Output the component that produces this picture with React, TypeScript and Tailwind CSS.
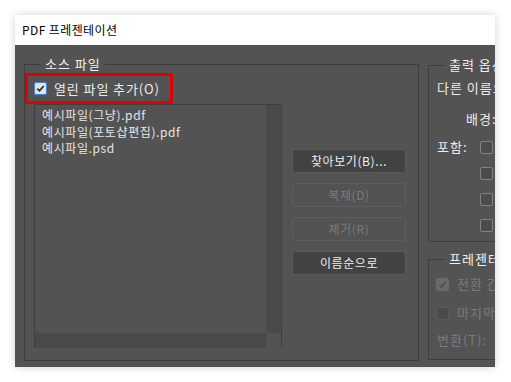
import React from 'react';

const FONT = { fontFamily: "'Noto Sans CJK KR', 'Noto Sans', sans-serif" };

type BoxKind = 'active' | 'off' | 'disabledOn' | 'disabledOff';

const Check: React.FC<{ kind: BoxKind }> = ({ kind }) => {
  const styles: Record<BoxKind, string> = {
    active: 'bg-[#dfe3ea] border-[#4d7fd4]',
    off: 'bg-[#4c4c4c] border-[#838383]',
    disabledOn: 'bg-[#6a6a6a] border-[#6a6a6a]',
    disabledOff: 'bg-[#4b4b4b] border-[#5c5c5c]',
  };
  const checked = kind === 'active' || kind === 'disabledOn';
  return (
    <span className={`w-[13px] h-[13px] shrink-0 rounded-[2px] border flex items-center justify-center ${styles[kind]}`}>
      {checked && (
        <svg width="9" height="9" viewBox="0 0 9 9">
          <path
            d="M1.3 4.6 L3.5 6.8 L7.7 2"
            fill="none"
            stroke={kind === 'active' ? '#2b2b2b' : '#4f4f4f'}
            strokeWidth="1.8"
          />
        </svg>
      )}
    </span>
  );
};

const Btn: React.FC<{ label: React.ReactNode; disabled?: boolean }> = ({ label, disabled }) => (
  <div
    className={`h-[24px] w-[114px] rounded-[3px] border flex items-center justify-center text-[12px] tracking-[0.6px] ${
      disabled
        ? 'bg-[#535353] border-[#5e5e5e] text-[#7b7b7b]'
        : 'bg-[#424242] border-[#5b5b5b] text-[#f0f0f0]'
    }`}
  >
    {label}
  </div>
);

const files = ['예시파일(그냥).pdf', '예시파일(포토샵편집).pdf', '예시파일.psd'];

export default function App() {
  return (
    <div className="min-h-screen bg-white p-[15px]" style={FONT}>
      <div className="w-[480px] h-[352px] overflow-hidden flex flex-col shadow-[0_0_8px_rgba(0,0,0,0.18)]">
        {/* Title bar */}
        <div className="h-[30px] shrink-0 bg-white flex items-center pl-[7px] text-[12px] tracking-[0.4px] text-black">
          PDF 프레젠테이션
        </div>

        {/* Body */}
        <div className="flex-1 bg-[#535353] flex items-start pl-[9px] pt-[11px] text-[#ececec]">
          {/* Source files */}
          <fieldset className="w-[395px] h-[305px] shrink-0 border border-[#3d3d3d]">
            <legend className="ml-[16px] px-[4px] text-[13px] leading-[16px] tracking-[1px] text-[#f0f0f0]">소스 파일</legend>
            <div className="mt-[1px] w-[148px] h-[31px] border-[3px] border-[#e20000] flex items-center pl-[6px] gap-[7px]">
              <Check kind="active" />
              <span className="text-[13px] leading-[16px] tracking-[0.9px]">열린 파일 추가(O)</span>
            </div>
            <div className="flex items-start">
              <div className="ml-[9px] w-[248px] h-[244px] border-t border-l border-r border-[#3f3f3f] flex flex-col">
                <div className="flex-1 flex min-h-0">
                  <div className="flex-1 pl-[7px] pt-[2px] text-[12px] leading-[16.5px] tracking-[0.6px] text-[#e6e6e6]">
                    {files.map(f => (
                      <div key={f}>{f}</div>
                    ))}
                  </div>
                  <div className="w-[15px] bg-[#4a4a4a]" />
                </div>
                <div className="h-[15px] flex">
                  <div className="flex-1 bg-[#4a4a4a]" />
                  <div className="w-[15px]" />
                </div>
              </div>
              <div className="ml-[10px] mt-[45px] flex flex-col gap-[10px]">
                <Btn label="찾아보기(B)..." />
                <Btn label="복제(D)" disabled />
                <Btn label="제거(R)" disabled />
                <Btn label="이름순으로" />
              </div>
            </div>
          </fieldset>

          {/* Right column */}
          <div className="ml-[9px] w-[170px] shrink-0 flex flex-col">
            <fieldset className="mt-[1px] h-[185px] border border-[#3d3d3d]">
              <legend className="ml-[16px] px-[4px] text-[13px] leading-[16px] tracking-[1px] text-[#f0f0f0] whitespace-nowrap">출력 옵션</legend>
              <div className="pl-[8px] flex flex-col text-[13px] leading-[16px] tracking-[1px] whitespace-nowrap">
                <div className="mt-[7px]">다른 이름으로 저장...</div>
                <div className="mt-[13px] pl-[29px] flex items-center gap-[8px]">
                  배경:
                  <span className="w-[60px] h-[20px] border border-[#5c5c5c] bg-[#424242]" />
                </div>
                <div className="mt-[10px] flex items-center">
                  <span className="w-[43px]">포함:</span>
                  <Check kind="off" />
                  <span className="ml-[8px]">주석</span>
                </div>
                {['파일 이름', '제목', '설명'].map(t => (
                  <div key={t} className="mt-[10px] pl-[43px] flex items-center">
                    <Check kind="off" />
                    <span className="ml-[8px]">{t}</span>
                  </div>
                ))}
              </div>
            </fieldset>

            <fieldset className="mt-[9px] h-[109px] border border-[#3d3d3d]">
              <legend className="ml-[16px] px-[4px] text-[13px] leading-[16px] tracking-[1px] text-[#f0f0f0] whitespace-nowrap">프레젠테이션 옵션</legend>
              <div className="pl-[7px] flex flex-col text-[13px] leading-[16px] tracking-[1px] whitespace-nowrap text-[#7b7b7b]">
                <div className="mt-[9px] flex items-center gap-[8px]">
                  <Check kind="disabledOn" />
                  전환 간격
                </div>
                <div className="mt-[13px] flex items-center gap-[8px]">
                  <Check kind="disabledOff" />
                  마지막 페이지 후 반복
                </div>
                <div className="mt-[11px] pl-[1px]">변환(T):</div>
              </div>
            </fieldset>
          </div>
        </div>
      </div>
    </div>
  );
}
